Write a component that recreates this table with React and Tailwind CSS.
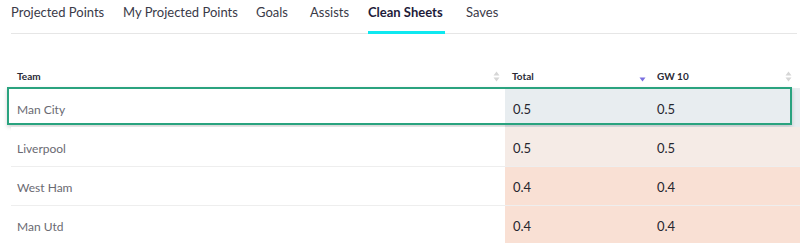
import React from 'react';

const tabs = [
  { label: 'Projected Points', w: 'w-[91px]' },
  { label: 'My Projected Points', w: 'w-[112px]' },
  { label: 'Goals', w: 'w-[33px]' },
  { label: 'Assists', w: 'w-[37px]' },
  { label: 'Clean Sheets', w: 'w-[77px]' },
  { label: 'Saves', w: 'w-[33px]' },
];

const rows = [
  { team: 'Man City', total: '0.5', gw: '0.5', bg: 'bg-[#e8edf0]', highlight: true },
  { team: 'Liverpool', total: '0.5', gw: '0.5', bg: 'bg-[#f5ebe6]' },
  { team: 'West Ham', total: '0.4', gw: '0.4', bg: 'bg-[#f9e0d4]' },
  { team: 'Man Utd', total: '0.4', gw: '0.4', bg: 'bg-[#f9e0d4]' },
];

const SortIcon = ({ active }) => (
  <svg width="7" height="11" viewBox="0 0 7 11" className="shrink-0">
    {!active && <path d="M3.5 0.5 L6.5 4.5 L0.5 4.5 Z" fill="#d6d6d6" />}
    <path d="M0.5 6.5 L6.5 6.5 L3.5 10.5 Z" fill={active ? '#7a6fe0' : '#d6d6d6'} />
  </svg>
);

const App = () => {
  return (
    <div className="w-[800px] h-[243px] bg-white overflow-hidden font-['Lato',sans-serif]">
      {/* TABS */}
      <div className="ml-[11px] mr-[3px] h-[34px] flex gap-[21px] border-b border-[#e6e6e6]">
        {tabs.map(t => (
          <div
            key={t.label}
            className={`${t.w} h-[34px] flex items-center whitespace-nowrap text-[13px] border-b-[3px] -mb-px
              ${t.label === 'Clean Sheets' ? 'border-[#0ee8f0] font-bold text-[#1e1b3a]' : 'border-transparent text-[#3a3a48]'}`}
          >
            <span className="-mt-[6px]">{t.label}</span>
          </div>
        ))}
      </div>

      {/* TABLE */}
      <div className="ml-[11px] mt-[31px]">
        <div className="flex h-[23px] items-center text-[10px] font-bold text-[#2a2a36]">
          <div className="w-[494px] pl-[6px] pr-[5px] flex items-center justify-between">
            <span>Team</span>
            <SortIcon />
          </div>
          <div className="w-[144px] pl-[7px] pr-[3px] flex items-center justify-between">
            <span>Total</span>
            <SortIcon active />
          </div>
          <div className="w-[148px] pl-[8px] pr-[5px] flex items-center justify-between">
            <span>GW 10</span>
            <SortIcon />
          </div>
        </div>

        {rows.map((r, i) => (
          <div key={r.team} className={`relative flex h-[39px] ${i > 1 ? 'border-t border-[#eeeeee]' : ''}`}>
            <div className="w-[494px] pl-[6px] flex items-center pt-[4px] text-[12px] text-[#6a6a72] bg-white">
              {r.team}
            </div>
            <div className={`w-[144px] pl-[8px] flex items-center pt-[4px] text-[13px] text-[#26262e] ${r.bg}`}>
              {r.total}
            </div>
            <div className={`w-[151px] pl-[8px] flex items-center pt-[4px] text-[13px] text-[#26262e] ${r.bg}`}>
              {r.gw}
            </div>
            {r.highlight && (
              <div className="absolute -left-[4px] right-[8px] -top-px bottom-[2px] border-2 border-[#2aa37f] shadow-[0_2px_4px_rgba(0,0,0,0.18)] pointer-events-none" />
            )}
          </div>
        ))}
      </div>
    </div>
  );
};

export default App;
